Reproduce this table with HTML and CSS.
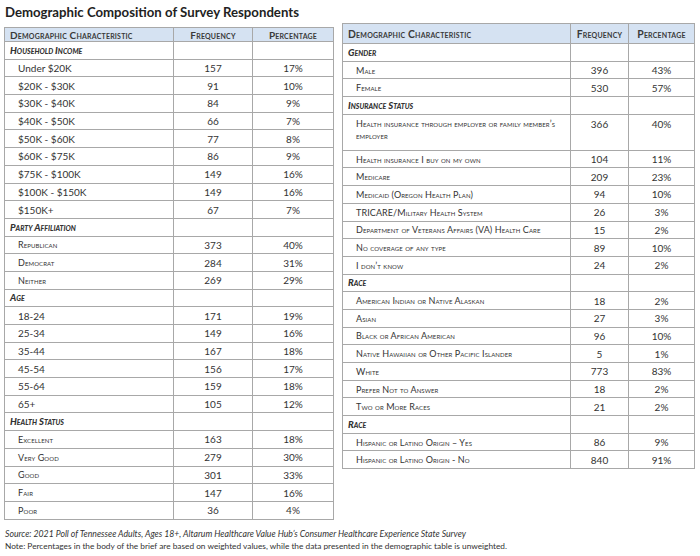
FILE: index.html
```html
<!DOCTYPE html>
<html lang="en">

<head>
  <meta charset="UTF-8" />
  <meta name="viewport" content="width=device-width, initial-scale=1.0" />
  <title>Demographic Composition of Survey Respondents</title>
  <link rel="stylesheet" href="styles.css">
</head>

<body>
  <div class="layout">
    <div class="col-left">
      <h1>Demographic Composition of Survey Respondents</h1>
      <table class="demo demo-left">
        <colgroup>
          <col class="c-label-l"><col class="c-freq-l"><col class="c-pct-l">
        </colgroup>
        <thead>
          <tr><th class="th-label">Demographic Characteristic</th><th>Frequency</th><th>Percentage</th></tr>
        </thead>
        <tbody>
          <tr class="cat"><td>Household Income</td><td></td><td></td></tr>
          <tr><td class="plain">Under $20K</td><td>157</td><td>17%</td></tr>
          <tr><td class="plain">$20K - $30K</td><td>91</td><td>10%</td></tr>
          <tr><td class="plain">$30K - $40K</td><td>84</td><td>9%</td></tr>
          <tr><td class="plain">$40K - $50K</td><td>66</td><td>7%</td></tr>
          <tr><td class="plain">$50K - $60K</td><td>77</td><td>8%</td></tr>
          <tr><td class="plain">$60K - $75K</td><td>86</td><td>9%</td></tr>
          <tr><td class="plain">$75K - $100K</td><td>149</td><td>16%</td></tr>
          <tr><td class="plain">$100K - $150K</td><td>149</td><td>16%</td></tr>
          <tr><td class="plain">$150K+</td><td>67</td><td>7%</td></tr>
          <tr class="cat"><td>Party Affiliation</td><td></td><td></td></tr>
          <tr><td class="sc">Republican</td><td>373</td><td>40%</td></tr>
          <tr><td class="sc">Democrat</td><td>284</td><td>31%</td></tr>
          <tr><td class="sc">Neither</td><td>269</td><td>29%</td></tr>
          <tr class="cat"><td>Age</td><td></td><td></td></tr>
          <tr><td class="plain">18-24</td><td>171</td><td>19%</td></tr>
          <tr><td class="plain">25-34</td><td>149</td><td>16%</td></tr>
          <tr><td class="plain">35-44</td><td>167</td><td>18%</td></tr>
          <tr><td class="plain">45-54</td><td>156</td><td>17%</td></tr>
          <tr><td class="plain">55-64</td><td>159</td><td>18%</td></tr>
          <tr><td class="plain">65+</td><td>105</td><td>12%</td></tr>
          <tr class="cat"><td>Health Status</td><td></td><td></td></tr>
          <tr><td class="sc">Excellent</td><td>163</td><td>18%</td></tr>
          <tr><td class="sc">Very Good</td><td>279</td><td>30%</td></tr>
          <tr><td class="sc">Good</td><td>301</td><td>33%</td></tr>
          <tr><td class="sc">Fair</td><td>147</td><td>16%</td></tr>
          <tr><td class="sc">Poor</td><td>36</td><td>4%</td></tr>
        </tbody>
      </table>
    </div>

    <div class="col-right">
      <table class="demo demo-right">
        <colgroup>
          <col class="c-label-r"><col class="c-freq-r"><col class="c-pct-r">
        </colgroup>
        <thead>
          <tr><th class="th-label">Demographic Characteristic</th><th>Frequency</th><th>Percentage</th></tr>
        </thead>
        <tbody>
          <tr class="cat"><td>Gender</td><td></td><td></td></tr>
          <tr><td class="sc">Male</td><td>396</td><td>43%</td></tr>
          <tr><td class="sc">Female</td><td>530</td><td>57%</td></tr>
          <tr class="cat"><td>Insurance Status</td><td></td><td></td></tr>
          <tr class="tall"><td class="sc">Health insurance through employer or family member’s employer</td><td>366</td><td>40%</td></tr>
          <tr><td class="sc">Health insurance I buy on my own</td><td>104</td><td>11%</td></tr>
          <tr><td class="sc">Medicare</td><td>209</td><td>23%</td></tr>
          <tr><td class="sc">Medicaid (Oregon Health Plan)</td><td>94</td><td>10%</td></tr>
          <tr><td class="sc">TRICARE/Military Health System</td><td>26</td><td>3%</td></tr>
          <tr><td class="sc">Department of Veterans Affairs (VA) Health Care</td><td>15</td><td>2%</td></tr>
          <tr><td class="sc">No coverage of any type</td><td>89</td><td>10%</td></tr>
          <tr><td class="sc">I don’t know</td><td>24</td><td>2%</td></tr>
          <tr class="cat"><td>Race</td><td></td><td></td></tr>
          <tr><td class="sc">American Indian or Native Alaskan</td><td>18</td><td>2%</td></tr>
          <tr><td class="sc">Asian</td><td>27</td><td>3%</td></tr>
          <tr><td class="sc">Black or African American</td><td>96</td><td>10%</td></tr>
          <tr><td class="sc">Native Hawaiian or Other Pacific Islander</td><td>5</td><td>1%</td></tr>
          <tr><td class="sc">White</td><td>773</td><td>83%</td></tr>
          <tr><td class="sc">Prefer Not to Answer</td><td>18</td><td>2%</td></tr>
          <tr><td class="sc">Two or More Races</td><td>21</td><td>2%</td></tr>
          <tr class="cat"><td>Race</td><td></td><td></td></tr>
          <tr><td class="sc">Hispanic or Latino Origin – Yes</td><td>86</td><td>9%</td></tr>
          <tr><td class="sc">Hispanic or Latino Origin - No</td><td>840</td><td>91%</td></tr>
        </tbody>
      </table>
    </div>
  </div>

  <div class="notes">
    <p class="source">Source: 2021 Poll of Tennessee Adults, Ages 18+, Altarum Healthcare Value Hub’s Consumer Healthcare Experience State Survey</p>
    <p class="note">Note: Percentages in the body of the brief are based on weighted values, while the data presented in the demographic table is unweighted.</p>
  </div>
</body>

</html>
```

FILE: styles.css
```css
body {
  margin: 0;
  padding: 4px 0 0 4px;
  font-family: Lato, "Open Sans", sans-serif;
  color: #333;
  background: #fff;
}

.layout {
  display: flex;
  align-items: flex-start;
  gap: 9px;
}

.col-left {
  width: 329px;
}

.col-right {
  width: 352px;
  padding-top: 19px;
}

h1 {
  margin: 0 0 6px 1px;
  font-size: 13.2px;
  line-height: 17px;
  color: #222;
  font-weight: bold;
}

table.demo {
  width: 100%;
  table-layout: fixed;
  border-collapse: collapse;
  border: 1.5px solid #808080;
  font-size: 10px;
}

.c-label-l { width: 169px; }
.c-freq-l { width: 79px; }
.c-pct-l { width: 81px; }

.c-label-r { width: 228px; }
.c-freq-r { width: 58px; }
.c-pct-r { width: 66px; }

th,
td {
  border: 1px solid #a8a8a8;
  padding: 0;
  text-align: center;
  vertical-align: middle;
}

th {
  background: #d5e2f2;
  font-variant: small-caps;
  font-weight: bold;
  color: #3a3a3a;
  letter-spacing: 0.2px;
}

.demo-left th {
  height: 13px;
  font-size: 10px;
}

.demo-right th {
  height: 19px;
  font-size: 10.4px;
}

th.th-label {
  text-align: left;
  padding-left: 5px;
}

td {
  height: 16.7px;
}

td:first-child {
  text-align: left;
  padding-left: 13px;
}

.cat td:first-child {
  padding-left: 5px;
  font-weight: 900;
  font-style: italic;
  font-variant: small-caps;
  font-size: 9.5px;
}

td.sc {
  font-variant: small-caps;
  font-size: 9px;
  letter-spacing: 0.1px;
}

.tall td {
  height: 32px;
  vertical-align: top;
  padding-top: 3px;
  line-height: 12px;
}

.tall td.sc {
  padding-right: 10px;
}

.notes {
  margin-top: 8px;
  padding-left: 1px;
  line-height: 12.5px;
  color: #333;
}

.notes p {
  margin: 0;
}

.source {
  font-style: italic;
  font-size: 8.7px;
}

.note {
  font-size: 8.3px;
}
```
